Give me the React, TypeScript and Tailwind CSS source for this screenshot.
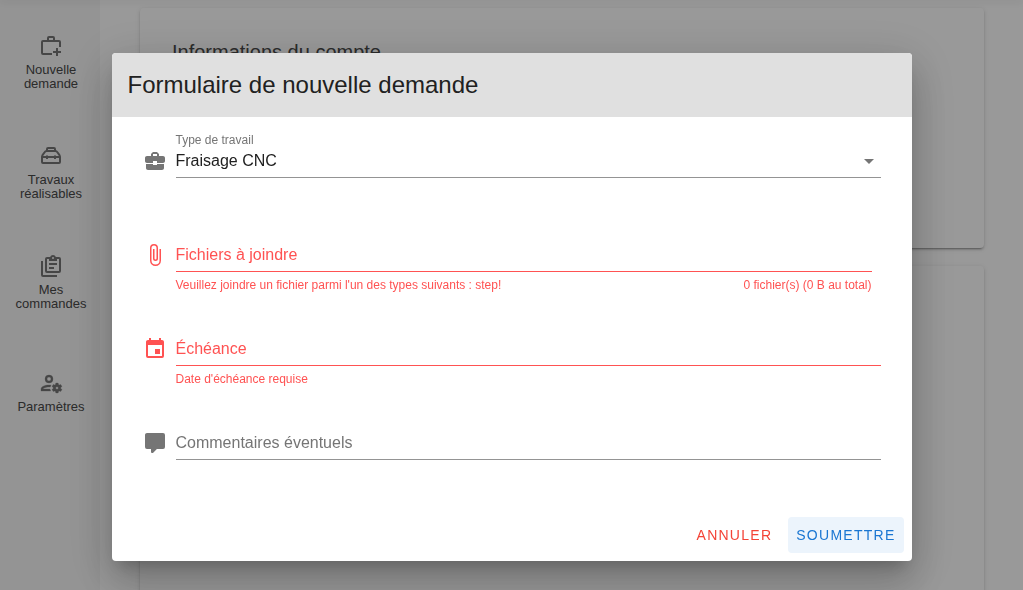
import React, { useState } from 'react';

type IconProps = { className?: string; children: React.ReactNode };

function Icon({ className = '', children }: IconProps) {
  return (
    <svg viewBox="0 0 24 24" fill="currentColor" aria-hidden="true" className={`size-6 shrink-0 ${className}`}>
      {children}
    </svg>
  );
}

const briefcasePlus = (
  <path d="M10 2H14A2 2 0 0 1 16 4V6H20A2 2 0 0 1 22 8V13H20V8H4V19H13V21H4A2 2 0 0 1 2 19V8A2 2 0 0 1 4 6H8V4A2 2 0 0 1 10 2M14 6V4H10V6H14M17 14H19V17H22V19H19V22H17V19H14V17H17V14Z" />
);

const toolbox = (
  <g fill="none" stroke="currentColor" strokeWidth="2" strokeLinejoin="round">
    <path d="M8 7V5A1 1 0 0 1 9 4H15A1 1 0 0 1 16 5V7" />
    <path d="M7.500 7H16.500A2 2 0 0 1 18.200 8L20.500 11.200A3 3 0 0 1 21 13V18A1 1 0 0 1 20 19H4A1 1 0 0 1 3 18V13A3 3 0 0 1 3.500 11.200L5.800 8A2 2 0 0 1 7.500 7Z" />
    <path d="M3 13H21M8 11.500V15M16 11.500V15" />
  </g>
);

const clipboards = (
  <path d="M4,7V21H18V23H4A2,2 0 0,1 2,21V7H4M20,3A2,2 0 0,1 22,5V17A2,2 0 0,1 20,19H8A2,2 0 0,1 6,17V5A2,2 0 0,1 8,3H11.180C11.600,1.840 12.700,1 14,1C15.300,1 16.400,1.840 16.820,3H20M14,3A1,1 0 0,0 13,4A1,1 0 0,0 14,5A1,1 0 0,0 15,4A1,1 0 0,0 14,3M10,7V5H8V17H20V5H18V7M15,15H10V13H15M18,11H10V9H18V11Z" />
);

const accountCog = (
  <path
    fillRule="evenodd"
    stroke="currentColor"
    strokeWidth="0.3"
    d="M10 4A4 4 0 0 0 6 8A4 4 0 0 0 10 12A4 4 0 0 0 14 8A4 4 0 0 0 10 4M10 6A2 2 0 0 1 12 8A2 2 0 0 1 10 10A2 2 0 0 1 8 8A2 2 0 0 1 10 6M17 12C16.87 12 16.76 12.09 16.74 12.21L16.55 13.53C16.25 13.66 15.96 13.82 15.7 14L14.46 13.5C14.35 13.5 14.22 13.5 14.15 13.63L13.15 15.36C13.09 15.47 13.11 15.6 13.21 15.68L14.27 16.5C14.25 16.67 14.24 16.83 14.24 17C14.24 17.17 14.25 17.33 14.27 17.5L13.21 18.32C13.12 18.4 13.09 18.53 13.15 18.64L14.15 20.37C14.21 20.5 14.34 20.5 14.46 20.5L15.7 20C15.96 20.18 16.24 20.35 16.55 20.47L16.74 21.79C16.76 21.91 16.86 22 17 22H19C19.11 22 19.22 21.91 19.24 21.79L19.43 20.47C19.73 20.34 20 20.18 20.27 20L21.5 20.5C21.63 20.5 21.76 20.5 21.83 20.37L22.83 18.64C22.89 18.53 22.86 18.4 22.77 18.32L21.7 17.5C21.72 17.33 21.74 17.17 21.74 17C21.74 16.83 21.73 16.67 21.7 16.5L22.76 15.68C22.85 15.6 22.88 15.47 22.82 15.36L21.82 13.63C21.76 13.5 21.63 13.5 21.5 13.5L20.27 14C20 13.82 19.73 13.65 19.42 13.53L19.23 12.21C19.22 12.09 19.11 12 19 12H17M18 15.7A1.3 1.3 0 0 1 18 18.3A1.3 1.3 0 0 1 18 15.7M10 14C5.58 14 2 15.79 2 18V20H11.68A7 7 0 0 1 11 18H4C4 17.42 6.75 16 10 16C10.450 16 10.880 16.030 11.300 16.070A7 7 0 0 1 12.080 14.200C11.420 14.070 10.720 14 10 14Z"
  />
);

const briefcase = (
  <path d="M10 16v-1H3.010L3 19c0 1.110.890 2 2 2h14c1.110 0 2-.890 2-2v-4h-7v1h-4zm10-9h-4.010V5l-2-2h-4l-2 2v2H4c-1.100 0-2 .900-2 2v3c0 1.110.890 2 2 2h6v-2h4v2h6c1.100 0 2-.900 2-2V9c0-1.100-.900-2-2-2zm-6 0h-4V5h4v2z" />
);

const paperclip = (
  <path d="M16.5,6V17.5A4,4 0 0,1 12.5,21.5A4,4 0 0,1 8.5,17.5V5A2.5,2.5 0 0,1 11,2.5A2.5,2.5 0 0,1 13.5,5V15.5A1,1 0 0,1 12.5,16.5A1,1 0 0,1 11.5,15.5V6H10V15.5A2.5,2.5 0 0,0 12.5,18A2.5,2.5 0 0,0 15,15.5V5A4,4 0 0,0 11,1A4,4 0 0,0 7,5V17.5A5.5,5.5 0 0,0 12.5,23A5.5,5.5 0 0,0 18,17.5V6H16.5Z" />
);

const calendar = (
  <path d="M19,19H5V8H19M16,1V3H8V1H6V3H5C3.89,3 3,3.89 3,5V19A2,2 0 0,0 5,21H19A2,2 0 0,0 21,19V5C21,3.89 20.1,3 19,3H18V1M17,12H12V17H17V12Z" />
);

const comment = (
  <path d="M9,22A1,1 0 0,1 8,21V18H4A2,2 0 0,1 2,16V4C2,2.89 2.9,2 4,2H20A2,2 0 0,1 22,4V16A2,2 0 0,1 20,18H13.9L10.2,21.71C10,21.9 9.75,22 9.5,22H9Z" />
);

const navItems = [
  { label: 'Nouvelle demande', icon: briefcasePlus },
  { label: 'Travaux réalisables', icon: toolbox },
  { label: 'Mes commandes', icon: clipboards },
  { label: 'Paramètres', icon: accountCog },
];

type FieldProps = {
  icon: React.ReactNode;
  error?: boolean;
  className?: string;
  caption?: React.ReactNode;
  helper?: React.ReactNode;
  children: React.ReactNode;
};

function Field({ icon, error = false, className = '', caption, helper, children }: FieldProps) {
  return (
    <div className={`grid grid-cols-[24px_1fr] gap-x-[9px] ${error ? 'text-[#ff5252]' : 'text-[#757575]'} ${className}`}>
      <Icon className="mb-[5px] self-end">{icon}</Icon>
      <div className="flex flex-col">
        <div className="h-[14px] text-xs leading-4">{caption}</div>
        <div className={`relative grid h-8 border-b ${error ? 'border-[#ff5252]' : 'border-[#949494]'}`}>{children}</div>
      </div>
      <div className="col-start-2 mt-[5px] flex min-h-4 justify-between text-xs leading-4">{helper}</div>
    </div>
  );
}

function FloatingLabel({ htmlFor, hidden = false, children }: { htmlFor: string; hidden?: boolean; children: React.ReactNode }) {
  return (
    <label htmlFor={htmlFor} className={`col-start-1 row-start-1 self-center pb-0.5 text-base leading-6 ${hidden ? 'invisible' : ''}`}>
      {children}
    </label>
  );
}

export default function App() {
  const [date, setDate] = useState('');
  const [notes, setNotes] = useState('');

  return (
    <div className="flex h-screen overflow-hidden bg-white font-['Liberation_Sans',Arial,sans-serif] text-[#212121]">
      <header className="fixed inset-x-0 top-0 z-10 h-0 shadow-[0_0_8px_1px_rgba(0,0,0,0.2)]" />

      <nav className="w-[100px] shrink-0 bg-[#f7f7f7] pt-[7px]">
        {navItems.map((item) => (
          <a
            key={item.label}
            href="#"
            className="flex h-[110px] flex-col items-center justify-center gap-[5px] pr-2 pl-[10px] text-center text-[13px] leading-[14px] text-[#484848]"
          >
            <Icon className="text-[#757575]">{item.icon}</Icon>
            {item.label}
          </a>
        ))}
      </nav>

      <main className="flex flex-1 flex-col gap-[18px] pt-2 pr-[39px] pl-10">
        <section className="min-h-60 rounded bg-white px-8 py-7 shadow-[0_3px_1px_-2px_rgba(0,0,0,0.2),0_2px_2px_0_rgba(0,0,0,0.14),0_1px_5px_0_rgba(0,0,0,0.12)]">
          <h2 className="text-xl leading-8 text-[#484848]">Informations du compte</h2>
        </section>
        <section className="min-h-96 flex-1 rounded bg-white shadow-[0_3px_1px_-2px_rgba(0,0,0,0.2),0_2px_2px_0_rgba(0,0,0,0.14),0_1px_5px_0_rgba(0,0,0,0.12)]" />
      </main>

      <div className="fixed inset-0 z-20 flex items-center justify-center bg-black/40 pt-6">
        <form
          role="dialog"
          aria-labelledby="dialog-title"
          onSubmit={(e) => e.preventDefault()}
          className="w-full max-w-[800px] overflow-hidden rounded bg-white shadow-[0_11px_15px_-7px_rgba(0,0,0,0.2),0_24px_38px_3px_rgba(0,0,0,0.14),0_9px_46px_8px_rgba(0,0,0,0.12)]"
        >
          <h1 id="dialog-title" className="bg-[#e0e0e0] p-4 text-2xl leading-8">
            Formulaire de nouvelle demande
          </h1>

          <div className="flex flex-col gap-[27px] px-[31px] pt-[15px] pb-7">
            <Field icon={briefcase} caption={<label htmlFor="type">Type de travail</label>}>
              <select id="type" className="appearance-none bg-transparent pb-0.5 text-base text-[#212121] outline-none">
                <option>Fraisage CNC</option>
              </select>
              <Icon className="pointer-events-none absolute top-[3px] right-0">
                <path d="M7 10L12 15L17 10H7Z" />
              </Icon>
            </Field>

            <Field
              icon={paperclip}
              error
              className="mr-[9px]"
              helper={
                <>
                  <span>Veuillez joindre un fichier parmi l'un des types suivants : step!</span>
                  <span>0 fichier(s) (0 B au total)</span>
                </>
              }
            >
              <FloatingLabel htmlFor="files">Fichiers à joindre</FloatingLabel>
              <input id="files" type="file" multiple className="col-start-1 row-start-1 w-full opacity-0" />
            </Field>

            <Field icon={calendar} error helper={<span>Date d'échéance requise</span>}>
              <FloatingLabel htmlFor="date" hidden={date !== ''}>Échéance</FloatingLabel>
              <input
                id="date"
                type="text"
                value={date}
                onChange={(e) => setDate(e.target.value)}
                className="col-start-1 row-start-1 bg-transparent outline-none"
              />
            </Field>

            <Field icon={comment}>
              <FloatingLabel htmlFor="notes" hidden={notes !== ''}>Commentaires éventuels</FloatingLabel>
              <input
                id="notes"
                type="text"
                value={notes}
                onChange={(e) => setNotes(e.target.value)}
                className="col-start-1 row-start-1 bg-transparent text-[#212121] outline-none"
              />
            </Field>
          </div>

          <div className="flex justify-end gap-2 p-2 text-sm tracking-[0.09em]">
            <button type="button" className="h-9 rounded px-2 text-[#f44336]">
              ANNULER
            </button>
            <button type="submit" className="h-9 rounded bg-[#ecf4fc] px-2 text-[#1976d2]">
              SOUMETTRE
            </button>
          </div>
        </form>
      </div>
    </div>
  );
}
